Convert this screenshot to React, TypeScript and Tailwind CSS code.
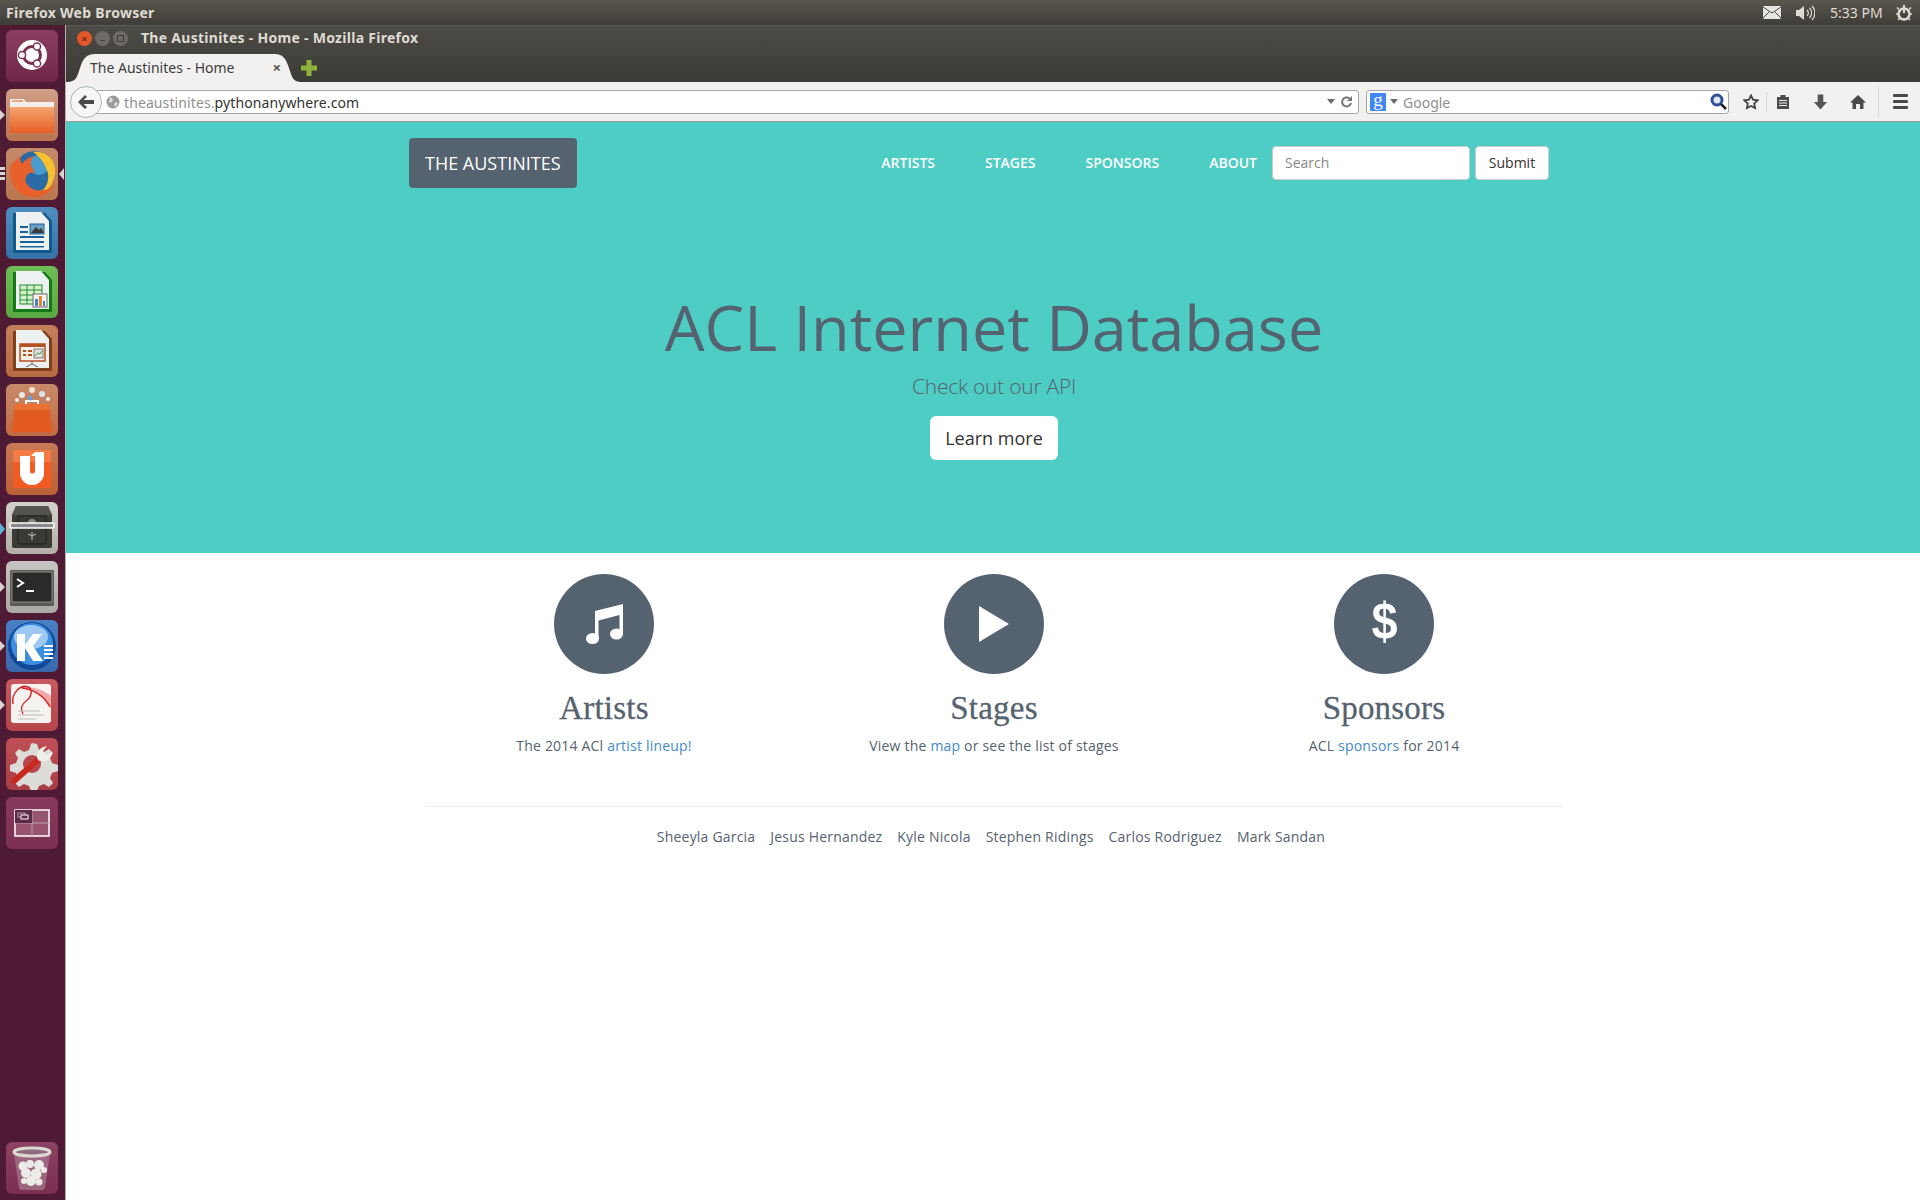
import React from 'react';

const ui = "font-['Noto_Sans','Open_Sans',sans-serif]";
const site = "font-['Open_Sans','Noto_Sans',sans-serif]";

const Pip: React.FC<{ kind: string }> = ({ kind }) => {
  if (kind === 'left') {
    return <span className="absolute -left-[6px] top-[21px] w-0 h-0 border-y-[5px] border-y-transparent border-l-[5px] border-l-[#d8d4d0]" />;
  }
  if (kind === 'safe') {
    return <span className="absolute -left-[6px] top-[21px] w-0 h-0 border-y-[6px] border-y-transparent border-l-[5px] border-l-[#5cb4d8]" />;
  }
  if (kind === 'multi') {
    return (
      <>
        <span className="absolute -left-[6px] top-[19px] w-[5px] h-[3px] bg-[#d8d4d0]" />
        <span className="absolute -left-[6px] top-[24px] w-[5px] h-[3px] bg-[#d8d4d0]" />
        <span className="absolute -left-[6px] top-[29px] w-[5px] h-[3px] bg-[#d8d4d0]" />
        <span className="absolute -right-[6px] top-[20px] w-0 h-0 border-y-[6px] border-y-transparent border-r-[5px] border-r-[#d8d4d0]" />
      </>
    );
  }
  return null;
};

const Tile: React.FC<{ bg: string; pip?: string; children: React.ReactNode }> = ({ bg, pip, children }) => (
  <div className={`relative w-[52px] h-[52px] rounded-[6px] shrink-0 ${bg}`}>
    <svg viewBox="0 0 52 52" className="w-[52px] h-[52px]">{children}</svg>
    {pip && <Pip kind={pip} />}
  </div>
);

const launcher = [
  {
    bg: 'bg-gradient-to-b from-[#8a3f60] to-[#6f2647]',
    art: (
      <g>
        <circle cx="26" cy="25" r="15" fill="#fff" />
        <circle cx="26" cy="25" r="8.5" fill="none" stroke="#7b2f52" strokeWidth="3" />
        <circle cx="16" cy="25" r="3.6" fill="#fff" stroke="#7b2f52" strokeWidth="1.5" />
        <circle cx="31" cy="16.5" r="3.6" fill="#fff" stroke="#7b2f52" strokeWidth="1.5" />
        <circle cx="31" cy="33.5" r="3.6" fill="#fff" stroke="#7b2f52" strokeWidth="1.5" />
      </g>
    ),
  },
  {
    bg: 'bg-gradient-to-b from-[#d0a088] to-[#b9734f]',
    pip: 'left',
    art: (
      <g>
        <defs>
          <linearGradient id="folderFill" x1="0" y1="0" x2="0" y2="1">
            <stop offset="0" stopColor="#f4a46e" />
            <stop offset="1" stopColor="#e95f25" />
          </linearGradient>
        </defs>
        <path d="M4 10h14l2 3h28v6H4z" fill="#f4efe9" />
        <rect x="6" y="11" width="11" height="2" fill="#eea57c" />
        <path d="M4 18h44v25a1 1 0 0 1-1 1H5a1 1 0 0 1-1-1z" fill="url(#folderFill)" />
      </g>
    ),
  },
  {
    bg: 'bg-gradient-to-b from-[#c58a6c] to-[#b9774f]',
    pip: 'multi',
    art: (
      <g>
        <circle cx="29" cy="23" r="20" fill="#2a6aa5" />
        <circle cx="33" cy="17" r="10" fill="#4a9ccd" />
        <path d="M27 4c14-2 24 9 22 22-2 11-7 17-14 19 8-9 9-17 5-25-3-7-7-12-13-16z" fill="#f7c02c" />
        <path d="M4 20C2 33 11 49 27 49c10 0 18-4 22-13-7 7-16 9-24 4-5-3-7-9-4-13 2-3 6-3 8-2 0-3-4-5-4-9-1-4 3-8 3-8-7 2-10 5-12 8-2-3-2-6-1-8-5 3-9 7-11 12z" fill="#e8602a" />
      </g>
    ),
  },
  {
    bg: 'bg-gradient-to-b from-[#4f8fc0] to-[#3572a3]',
    art: (
      <g>
        <path d="M7 6h32l7 8v32H7z" fill="#0f5a8c" />
        <path d="M10 5h25l8 9v29H10z" fill="#eef1f2" />
        <rect x="14" y="19" width="8" height="2" fill="#18649a" />
        <rect x="14" y="24" width="8" height="2" fill="#18649a" />
        <rect x="14" y="29" width="24" height="2" fill="#18649a" />
        <rect x="14" y="34" width="24" height="2" fill="#18649a" />
        <rect x="14" y="39" width="24" height="1.5" fill="#18649a" />
        <rect x="24" y="17" width="14" height="10" fill="#6d9dc0" stroke="#18649a" />
        <path d="M25 26l5-6 3 3 2-2 3 5z" fill="#3c3a34" />
      </g>
    ),
  },
  {
    bg: 'bg-gradient-to-b from-[#6cbd54] to-[#5aa843]',
    art: (
      <g>
        <path d="M7 6h32l7 8v32H7z" fill="#15791a" />
        <path d="M10 5h25l8 9v29H10z" fill="#eef1f2" />
        <g stroke="#1f8f2a" strokeWidth="1" fill="#d8f0d0">
          <rect x="14" y="19" width="22" height="19" />
          <path d="M14 24h22M14 29h22M14 34h22M21 19v19M28 19v19" fill="none" />
        </g>
        <rect x="27" y="28" width="14" height="13" fill="#f4f4f2" stroke="#6a6a6a" />
        <rect x="29" y="33" width="3" height="7" fill="#3d86c6" />
        <rect x="33" y="30" width="3" height="10" fill="#e8832f" />
        <rect x="37" y="35" width="2" height="5" fill="#3d86c6" />
      </g>
    ),
  },
  {
    bg: 'bg-gradient-to-b from-[#c4805a] to-[#b56b42]',
    art: (
      <g>
        <path d="M7 6h32l7 8v32H7z" fill="#80401c" />
        <path d="M10 5h25l8 9v29H10z" fill="#eef1f2" />
        <rect x="14" y="19" width="25" height="17" fill="#f8f0e6" stroke="#b4521f" strokeWidth="1.5" />
        <rect x="14" y="19" width="25" height="3" fill="#b4521f" />
        <rect x="17" y="25" width="3" height="2" fill="#b4521f" />
        <rect x="22" y="25" width="4" height="2" fill="#b4521f" />
        <rect x="17" y="29" width="3" height="2" fill="#b4521f" />
        <rect x="22" y="29" width="4" height="2" fill="#b4521f" />
        <rect x="28" y="24" width="9" height="9" fill="#e0e0dc" stroke="#7a7a7a" />
        <path d="M29 31l3-3 2 1 2-3" stroke="#3a9a3a" fill="none" />
        <path d="M26 36v3M26 39l-6 3M26 39l6 3" stroke="#6a6a6a" strokeWidth="1" />
      </g>
    ),
  },
  {
    bg: 'bg-gradient-to-b from-[#c88a6a] to-[#c06a42]',
    art: (
      <g>
        <path d="M9 20h34l3 28H6z" fill="#e25a1f" />
        <path d="M9 20h34l1 6H8z" fill="#ea7034" />
        <path d="M20 20v-3h12v3" fill="none" stroke="#fff" strokeWidth="2" />
        <circle cx="16" cy="11" r="3" fill="#e8e8e4" />
        <circle cx="26" cy="6" r="3" fill="#f0e4d4" />
        <circle cx="36" cy="10" r="3" fill="#d8e4f0" />
        <circle cx="11" cy="16" r="2" fill="#eee" />
        <circle cx="42" cy="15" r="2" fill="#eee" />
        <circle cx="24" cy="14" r="2.5" fill="#6aa0d0" />
      </g>
    ),
  },
  {
    bg: 'bg-gradient-to-b from-[#c87a58] to-[#bb5f36]',
    art: (
      <g>
        <rect x="7" y="7" width="38" height="38" rx="2" fill="#f25c22" />
        <rect x="7" y="7" width="38" height="12" fill="#f57a44" />
        <path d="M14 13h10v15a2.500 2.500 0 0 0 5 0V13l-4 0 4-4h9v21a12 12 0 0 1-24 0z" fill="#fff" />
      </g>
    ),
  },
  {
    bg: 'bg-gradient-to-b from-[#d4d1cc] to-[#b2afa8]',
    pip: 'safe',
    art: (
      <g>
        <path d="M10 4h32l4 9v31a2 2 0 0 1-2 2H8a2 2 0 0 1-2-2V13z" fill="#3b3a36" />
        <path d="M10 4h32l4 9H6z" fill="#55534d" />
        <rect x="12" y="14" width="28" height="28" rx="2" fill="none" stroke="#1f1e1c" />
        <circle cx="26" cy="21" r="4" fill="#8f8d88" />
        <path d="M26 30v8M22 32l4 2 4-2" stroke="#c4c2bc" strokeWidth="1" fill="none" />
        <rect x="4" y="21" width="44" height="5" rx="2" fill="#8a8a8a" stroke="#fff" strokeWidth="1.500" />
      </g>
    ),
  },
  {
    bg: 'bg-gradient-to-b from-[#c7c5c1] to-[#aaa8a4]',
    pip: 'left',
    art: (
      <g>
        <rect x="4" y="9" width="44" height="36" rx="1" fill="#5b5a56" />
        <rect x="6" y="11" width="40" height="30" fill="#2b2a28" stroke="#8a8985" />
        <path d="M11 18l6 4-6 4" fill="none" stroke="#fff" strokeWidth="2" />
        <rect x="20" y="29" width="8" height="2" fill="#fff" />
      </g>
    ),
  },
  {
    bg: 'bg-gradient-to-b from-[#4a80c4] to-[#3a69ab]',
    pip: 'left',
    art: (
      <g>
        <circle cx="26" cy="26" r="24" fill="#11489a" />
        <circle cx="26" cy="24" r="21" fill="#3c8ee0" />
        <ellipse cx="25" cy="17" rx="17" ry="12" fill="#9cc8f2" />
        <path d="M11 14h8v11l8-11h9l-9 12 10 15h-10l-8-13v13h-8z" fill="#fff" />
        <path d="M38 30h9M38 34h9M38 38h9M38 26h9" stroke="#fff" strokeWidth="2" />
      </g>
    ),
  },
  {
    bg: 'bg-gradient-to-b from-[#c65a5e] to-[#b3454b]',
    pip: 'left',
    art: (
      <g>
        <path d="M8 5h34a3 3 0 0 1 3 3v33a3 3 0 0 1-3 3H8a3 3 0 0 1-3-3V8a3 3 0 0 1 3-3z" fill="#f4f3f0" />
        <path d="M18 8c10 2 22 10 27 22V17C38 11 28 8 18 8z" fill="#f0a8a8" />
        <path d="M7 25c-2-10 7-20 15-17 5 2 4 10-2 14-4 3-6 8-3 13M16 9c10 1 22 7 28 19" fill="none" stroke="#d6272e" strokeWidth="1.500" />
        <path d="M12 32h22M12 36h26M12 40h18" stroke="#bdbdb8" strokeWidth="1" />
      </g>
    ),
  },
  {
    bg: 'bg-gradient-to-b from-[#c05056] to-[#a93d44]',
    art: (
      <g>
        <path d="M26 5l5 1 2 6 5 2 5-3 4 4-3 5 2 5 6 2v6l-6 2-2 5 3 5-4 4-5-3-5 2-2 5h-6l-2-5-5-2-5 3-4-4 3-5-2-5-6-2v-6l6-2 2-5-3-5 4-4 5 3 5-2 2-6z" fill="#dcdcd8" />
        <circle cx="26" cy="26" r="9" fill="#b8474d" />
        <path d="M8 43L34 20" stroke="#c7281f" strokeWidth="6" strokeLinecap="round" />
        <path d="M32 22c-3-6 1-13 9-14l-4 5 3 4 6-3c0 7-7 12-14 8z" fill="#efefec" />
      </g>
    ),
  },
  {
    bg: 'bg-gradient-to-b from-[#88395c] to-[#7c2f52]',
    art: (
      <g>
        <rect x="9" y="13" width="34" height="26" fill="#96546f" stroke="#fff" strokeWidth="1.500" />
        <path d="M26 13v26M9 26h34" stroke="#b8a0ab" strokeWidth="1" />
        <rect x="9" y="13" width="17" height="13" fill="#5c2a44" />
        <rect x="12" y="16" width="7" height="4" fill="none" stroke="#b8a0ab" />
        <rect x="15" y="18" width="7" height="4" fill="#5c2a44" stroke="#fff" />
      </g>
    ),
  },
];

const MusicIcon = () => (
  <svg viewBox="0 0 37 40" className="w-[37px] h-[40px]" fill="#fff">
    <ellipse cx="6.500" cy="34.500" rx="6.500" ry="5.500" />
    <ellipse cx="30.500" cy="30" rx="6.500" ry="5.500" />
    <path d="M9 35V7L37 0v31h-3.500V11L12.500 16.500V35z" />
  </svg>
);

const PlayIcon = () => (
  <svg viewBox="0 0 30 36" className="w-[30px] h-[36px]" fill="#fff">
    <path d="M0 0l30 18L0 36z" />
  </svg>
);

const features = [
  { key: 'artists', icon: <MusicIcon />, title: 'Artists', body: <>The 2014 ACl <a className="text-[#428bca]">artist lineup!</a></> },
  { key: 'stages', icon: <PlayIcon />, title: 'Stages', body: <>View the <a className="text-[#428bca]">map</a> or see the list of stages</> },
  {
    key: 'sponsors',
    icon: <span className="font-['Liberation_Sans',sans-serif] font-bold text-[52px] leading-none text-white -mt-[6px] scale-x-90">$</span>,
    title: 'Sponsors',
    body: <>ACL <a className="text-[#428bca]">sponsors</a> for 2014</>,
  },
];

const team = ['Sheeyla Garcia', 'Jesus Hernandez', 'Kyle Nicola', 'Stephen Ridings', 'Carlos Rodriguez', 'Mark Sandan'];

export default function App() {
  return (
    <div className={`flex flex-col w-[1920px] h-[1200px] overflow-hidden bg-white ${site}`}>
      {/* Ubuntu panel */}
      <div className={`flex items-center h-[25px] pl-[6px] bg-gradient-to-b from-[#5a574d] to-[#3f3d38] ${ui}`}>
        <span className="pb-[1px] text-[14px] font-bold text-[#dfdbd2] tracking-[0.28px]">Firefox Web Browser</span>
        <div className="ml-auto flex items-center">
          <svg viewBox="0 0 18 13" className="w-[18px] h-[13px] mr-[14px]">
            <rect width="18" height="13" rx="1" fill="#e8e6e0" />
            <path d="M0 1l9 6 9-6M0 12l6-6M18 12l-6-6" fill="none" stroke="#4a4842" strokeWidth="1" />
          </svg>
          <svg viewBox="0 0 20 18" className="w-[20px] h-[18px] mr-[15px]">
            <path d="M1 6h3l5-4v14l-5-4H1z" fill="#dfdbd2" />
            <path d="M12 6a4 4 0 0 1 0 6M14.500 4a7 7 0 0 1 0 10M17 2a10 10 0 0 1 0 14" fill="none" stroke="#dfdbd2" strokeWidth="1.200" />
          </svg>
          <span className="text-[14px] text-[#dfdbd2] w-[54px] mr-[11px]">5:33 PM</span>
          <svg viewBox="0 0 18 18" className="w-[18px] h-[18px] mr-[7px]" fill="none" stroke="#dfdbd2">
            <circle cx="9" cy="10" r="5.500" strokeWidth="2.500" />
            <path d="M9 1v8" strokeWidth="2" />
            <path d="M2 3.500l2 2M16 3.500l-2 2M1 10h1.500M17 10h-1.500M3 16l1.500-1.500M15 16l-1.500-1.500" strokeWidth="1.500" />
          </svg>
        </div>
      </div>

      <div className="flex flex-1 min-h-0">
        {/* Launcher */}
        <aside className="flex flex-col items-center w-[65px] shrink-0 pt-[5px] pb-[6px] gap-[7px] pr-[1px] bg-[#4e1a34]">
          {launcher.map((item, i) => (
            <Tile key={i} bg={item.bg} pip={item.pip}>{item.art}</Tile>
          ))}
          <div className="mt-auto">
            <Tile bg="bg-gradient-to-b from-[#8d4263] to-[#7a2f50]">
              <path d="M8 11l5 35a3 3 0 0 0 3 2h20a3 3 0 0 0 3-2l5-35z" fill="#a87a90" opacity="0.7" />
              <g fill="#ecebe8">
                <circle cx="17" cy="24" r="4.500" />
                <circle cx="24" cy="22" r="4" />
                <circle cx="33" cy="23" r="5" />
                <circle cx="38" cy="28" r="3" />
                <circle cx="20" cy="31" r="5" />
                <circle cx="30" cy="32" r="5.500" />
                <circle cx="25" cy="39" r="5" />
                <circle cx="33" cy="40" r="3.500" />
                <circle cx="18" cy="39" r="3" />
              </g>
              <ellipse cx="26" cy="10" rx="18" ry="4" fill="#8f6a7c" stroke="#dcd9d4" strokeWidth="3" />
            </Tile>
          </div>
        </aside>

        <div className="flex flex-col flex-1 min-w-0 border-l border-[#b4b2ae]">
          {/* Firefox title bar and tab strip */}
          <div className={`h-[57px] border-t border-[#5c5a52] bg-gradient-to-b from-[#4c4b45] to-[#3c3b37] ${ui}`}>
            <div className="flex items-center h-[25px] pl-[11px]">
              <span className="flex items-center justify-center w-[15px] h-[15px] rounded-full bg-[#e4572a] text-[#55200c] text-[11px] leading-none">×</span>
              <span className="flex items-center justify-center w-[15px] h-[15px] ml-[3px] rounded-full bg-[#6d6b64] text-[#3c3b37] text-[10px] leading-none">–</span>
              <span className="flex items-center justify-center w-[15px] h-[15px] ml-[3px] rounded-full bg-[#6d6b64]">
                <span className="w-[7px] h-[7px] border border-[#3c3b37]" />
              </span>
              <span className="ml-[13px] pb-[2px] text-[14px] font-bold text-[#dfdbd2] tracking-[0.28px]">The Austinites - Home - Mozilla Firefox</span>
            </div>
            <div className="flex items-end h-[31px] pl-[1px]">
              <div className="relative w-[234px] h-[28px] shrink-0">
                <svg viewBox="0 0 234 28" className="absolute inset-0 w-[234px] h-[28px]">
                  <path d="M0 28c9 0 10-5 13-14C16 5 19 0 28 0h180c8 0 11 5 14 14 3 9 4 14 12 14z" fill="#f2f1f0" />
                </svg>
                <div className="relative flex items-center h-[28px] pl-[23px] pr-[20px] pb-[2px]">
                  <span className="text-[14px] text-[#3c3c3c]">The Austinites - Home</span>
                  <span className="ml-auto font-bold text-[15px] leading-none text-[#55534f]">×</span>
                </div>
              </div>
              <svg viewBox="0 0 16 16" className="w-[16px] h-[16px] ml-[0px] mb-[6px]">
                <path d="M5.500 0h5v5.500H16v5h-5.500V16h-5v-5.500H0v-5h5.500z" fill="#8db33b" />
              </svg>
            </div>
          </div>

          {/* Navigation toolbar */}
          <div className={`relative flex items-center h-[40px] bg-[#f2f1f0] border-b border-[#9d9c9a] pl-[21px] ${ui}`}>
            <div className="absolute left-[4px] top-[4px] flex items-center justify-center w-[32px] h-[32px] rounded-full bg-[#f7f6f5] border border-[#a9b3c0]">
              <svg viewBox="0 0 16 14" className="w-[16px] h-[14px]">
                <path d="M7 0l2 2-3.500 3H16v4H5.500L9 12l-2 2-7-7z" fill="#4a4a4a" />
              </svg>
            </div>
            <div className="flex items-center w-[1272px] h-[24px] pl-[18px] pr-[5px] bg-white border border-[#a6a6a6] rounded-r-[3px]">
              <svg viewBox="0 0 14 14" className="w-[14px] h-[14px] mr-[4px]">
                <circle cx="7" cy="7" r="6.500" fill="#9a9a9a" />
                <path d="M4 2l3 2-1 3-3 1M9 7l3 1-2 4-2-2z" fill="#dcdcdc" />
              </svg>
              <span className="pt-[2px] text-[14px] text-[#8f8f8f] tracking-[0.1px]">theaustinites.</span>
              <span className="pt-[2px] text-[14px] text-[#333] tracking-[0.1px]">pythonanywhere.com</span>
              <span className="ml-auto w-0 h-0 mr-[6px] border-x-[4px] border-x-transparent border-t-[5px] border-t-[#6c6c6c]" />
              <svg viewBox="0 0 12 12" className="w-[12px] h-[12px]" fill="none" stroke="#777" strokeWidth="2">
                <path d="M10 7a4.500 4.500 0 1 1-1.500-4.500" />
                <path d="M11 0v5H6z" fill="#777" stroke="none" />
              </svg>
            </div>
            <div className="flex items-center w-[363px] h-[24px] ml-[7px] pl-[3px] pr-[1px] bg-white border border-[#a6a6a6] rounded-[3px]">
              <span className="flex items-center justify-center w-[16px] h-[18px] rounded-[1px] bg-[#4285f4] text-white text-[19px] font-['Liberation_Serif',serif] leading-none pb-[4px]">g</span>
              <span className="w-0 h-0 ml-[4px] mr-[5px] border-x-[4px] border-x-transparent border-t-[5px] border-t-[#6c6c6c]" />
              <span className="pt-[2px] text-[14px] text-[#8f8f8f]">Google</span>
              <svg viewBox="0 0 17 17" className="ml-auto w-[17px] h-[17px]" fill="none">
                <circle cx="7" cy="7" r="5" stroke="#2f4f9a" strokeWidth="3" fill="#dfe8f6" />
                <path d="M11 11l5 5" stroke="#222" strokeWidth="2.500" />
              </svg>
            </div>
            <svg viewBox="0 0 16 16" className="w-[16px] h-[16px] ml-[14px]" fill="none" stroke="#444" strokeWidth="1.800">
              <path d="M8 1.500l2 4.200 4.600.6-3.400 3.200.9 4.600L8 11.900l-4.100 2.200.9-4.600L1.400 6.300 6 5.700z" />
            </svg>
            <span className="w-px h-[20px] ml-[7px] bg-[#d8d8d6]" />
            <svg viewBox="0 0 14 16" className="w-[14px] h-[16px] ml-[9px]">
              <path d="M1 3h12v12H1z" fill="#4a4a4a" />
              <rect x="4.500" y="1" width="5" height="3" fill="#4a4a4a" />
              <path d="M3 6.500h8M3 9h8M3 11.500h8" stroke="#f2f1f0" strokeWidth="1" />
            </svg>
            <svg viewBox="0 0 16 16" className="w-[15px] h-[16px] ml-[23px]">
              <path d="M5 0h6v8h4l-7 8-7-8h4z" fill="#555" />
            </svg>
            <svg viewBox="0 0 16 16" className="w-[16px] h-[16px] ml-[22px]">
              <path d="M8 1L0 8.500h2.500V15H6v-5h4v5h3.500V8.500H16z" fill="#4a4a4a" />
            </svg>
            <span className="w-px h-[30px] ml-[12px] bg-[#d8d8d6]" />
            <div className="flex flex-col gap-[3px] ml-[14px]">
              <span className="w-[15px] h-[3px] rounded-[1px] bg-[#4a4a4a]" />
              <span className="w-[15px] h-[3px] rounded-[1px] bg-[#4a4a4a]" />
              <span className="w-[15px] h-[3px] rounded-[1px] bg-[#4a4a4a]" />
            </div>
          </div>

          {/* Page */}
          <section className="flex flex-col items-center h-[431px] shrink-0 pl-[2px] bg-[#4ecdc4]">
            <nav className="flex items-center justify-between self-start w-[1140px] h-[50px] mt-[16px] ml-[341px]">
              <a className="flex items-center h-[50px] px-4 pt-[1px] rounded-[4px] bg-[#556270] text-white text-[18px]">THE AUSTINITES</a>
              <div className="flex items-center">
                <ul className="flex items-center gap-[50px] pb-[1px] text-[14px] font-semibold text-white">
                  <li>ARTISTS</li>
                  <li>STAGES</li>
                  <li>SPONSORS</li>
                  <li>ABOUT</li>
                </ul>
                <div className="flex items-center w-[198px] h-[34px] ml-[15px] px-3 pb-[2px] bg-white border border-[#ccc] rounded-[4px] text-[14px] text-[#888]">Search</div>
                <button className="w-[74px] h-[34px] ml-[5px] pb-[2px] bg-white border border-[#ccc] rounded-[4px] text-[14px] text-[#333]">Submit</button>
              </div>
            </nav>
            <h1 className="mt-[104px] text-[63px] leading-[69px] text-[#556270]">ACL Internet Database</h1>
            <p className="mt-[10px] text-[21px] leading-[30px] font-light tracking-[-0.25px] text-[#556270]">Check out our API</p>
            <button className="w-[128px] h-[44px] mt-[15px] bg-white rounded-[6px] text-[18px] text-[#333]">Learn more</button>
          </section>

          <section className="flex justify-center w-[1172px] mx-auto pl-[2px] pt-[21px]">
            {features.map(f => (
              <div key={f.key} className="flex flex-col items-center w-[390px]">
                <div className="flex items-center justify-center w-[100px] h-[100px] rounded-full bg-[#556270]">{f.icon}</div>
                <h2 className="mt-[16px] text-[33px] leading-[36px] font-['Liberation_Serif',serif] [-webkit-text-stroke:0.3px_#556270] tracking-[0.2px] text-[#556270]">{f.title}</h2>
                <p className="mt-[10px] text-[14px] leading-[20px] tracking-[0.2px] text-[#556270]">{f.body}</p>
              </div>
            ))}
          </section>

          <footer className="flex flex-col items-center w-[1138px] mt-[50px] ml-[359px] pr-[6px] border-t border-[#eee] pt-[20px]">
            <ul className="flex gap-[15px] text-[14px] leading-[20px] tracking-[0.2px] text-[#556270]">
              {team.map(name => <li key={name}>{name}</li>)}
            </ul>
          </footer>
        </div>
      </div>
    </div>
  );
}
